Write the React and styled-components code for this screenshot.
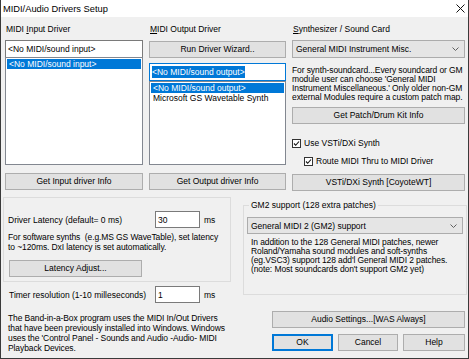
import styled, { createGlobalStyle } from "styled-components";

const GlobalStyle = createGlobalStyle`
  html, body {
    margin: 0;
    padding: 0;
    background: #ffffff;
  }
  body {
    font-family: "Liberation Sans", Arial, sans-serif;
    font-size: 8.5px;
    color: #000;
  }
  * {
    box-sizing: border-box;
  }
`;

const Window = styled.div`
  width: 469px;
  height: 359px;
  display: flex;
  flex-direction: column;
  background: #f0f0f0;
  border: 1px solid #3a3a3a;
  border-top: none;
  overflow: hidden;
`;

const TitleBar = styled.div`
  height: 17px;
  flex-shrink: 0;
  display: flex;
  align-items: center;
  justify-content: space-between;
  padding: 0 3px 0 2px;
  background: #ffffff;
  font-size: 9.3px;
`;

const Body = styled.div`
  flex: 1;
  display: flex;
  flex-direction: column;
  padding-top: 6px;
`;

const TopGrid = styled.div`
  display: grid;
  grid-template-columns: 138px 137px 173px;
  column-gap: 6px;
  padding-left: 4px;
`;

const Column = styled.div`
  display: flex;
  flex-direction: column;
`;

const Label = styled.div`
  height: 12px;
  line-height: 12px;
  margin-bottom: 5px;
  padding-left: 1px;
  white-space: nowrap;
`;

const Button = styled.button`
  width: ${(p) => (p.$w ? `${p.$w}px` : "100%")};
  height: 17px;
  margin: ${(p) => p.$m || "0"};
  padding: 0;
  font-family: inherit;
  font-size: inherit;
  line-height: 15px;
  color: #000;
  background: #e1e1e1;
  border: 1px solid ${(p) => (p.$primary ? "#0078d7" : "#adadad")};
  box-shadow: ${(p) => (p.$primary ? "inset 0 0 0 1px #0078d7" : "none")};
  white-space: nowrap;
`;

const Edit = styled.div`
  width: ${(p) => (p.$w ? `${p.$w}px` : "100%")};
  height: ${(p) => p.$h || 18}px;
  margin-top: ${(p) => p.$mt || 0}px;
  display: flex;
  align-items: center;
  padding-left: 2px;
  background: #ffffff;
  border: 1px solid ${(p) => (p.$focus ? "#0078d7" : "#7a7a7a")};
  white-space: nowrap;
`;

const Selected = styled.span`
  background: #0078d7;
  color: #ffffff;
  line-height: 12px;
`;

const ListBox = styled.div`
  height: ${(p) => p.$h}px;
  margin-top: ${(p) => p.$mt || 0}px;
  padding: 1px;
  background: #ffffff;
  border: 1px solid #828790;
`;

const ListItem = styled.div`
  height: 10px;
  line-height: 10px;
  padding-left: 2px;
  background: ${(p) => (p.$sel ? "#0078d7" : "transparent")};
  color: ${(p) => (p.$sel ? "#ffffff" : "#000")};
  white-space: nowrap;
`;

const Combo = styled.div`
  width: ${(p) => (p.$w ? `${p.$w}px` : "100%")};
  height: ${(p) => p.$h || 18}px;
  margin-top: ${(p) => p.$mt || 0}px;
  display: flex;
  align-items: center;
  justify-content: space-between;
  padding: 0 5px 0 3px;
  background: #e5e5e5;
  border: 1px solid #acacac;
  white-space: nowrap;
`;

const Note = styled.div`
  margin: ${(p) => p.$m || "0"};
  line-height: ${(p) => p.$lh || 9}px;
  letter-spacing: -0.1px;
  white-space: nowrap;
`;

const CheckRow = styled.div`
  height: 10px;
  margin-top: ${(p) => p.$mt}px;
  margin-left: ${(p) => p.$ml || 0}px;
  display: flex;
  align-items: center;
  gap: 3px;
  white-space: nowrap;
`;

const BottomGrid = styled.div`
  display: grid;
  grid-template-columns: 228px 224px;
  column-gap: 12px;
  margin-top: 6px;
  padding-left: 2px;
`;

const LatencyGroup = styled.div`
  height: 85px;
  padding: 13px 0 0 4px;
  border: 1px solid #dcdcdc;
`;

const FieldRow = styled.div`
  height: 17px;
  display: flex;
  align-items: center;
  margin: ${(p) => p.$m || "0"};
  padding-left: ${(p) => p.$pl || 0}px;
`;

const FieldLabel = styled.div`
  width: ${(p) => p.$w}px;
  white-space: nowrap;
`;

const Unit = styled.span`
  margin-left: 4px;
`;

const RightColumn = styled.div`
  display: flex;
  flex-direction: column;
`;

const Group = styled.fieldset`
  margin: 3px 0 0 0;
  padding: 0 3px 20px;
  min-width: 0;
  border: 1px solid #dcdcdc;
`;

const Legend = styled.legend`
  margin-left: 2px;
  padding: 0 2px;
  line-height: 10px;
  white-space: nowrap;
`;

const ButtonRow = styled.div`
  display: flex;
  gap: 5px;
  align-self: flex-end;
  margin: 6px 2px 0 0;
`;

function CloseIcon() {
  return (
    <svg width="9" height="9" viewBox="0 0 9 9">
      <path d="M0.5 0.5 L8.5 8.5 M8.5 0.5 L0.5 8.5" stroke="#111" strokeWidth="1" />
    </svg>
  );
}

function Chevron() {
  return (
    <svg width="7" height="4" viewBox="0 0 7 4">
      <path d="M0.5 0.5 L3.5 3.5 L6.5 0.5" fill="none" stroke="#606060" strokeWidth="1" />
    </svg>
  );
}

function CheckBox() {
  return (
    <svg width="9" height="9" viewBox="0 0 9 9">
      <rect x="0.5" y="0.5" width="8" height="8" fill="#fff" stroke="#333" />
      <path d="M2 4.5 L3.7 6.3 L7 2.5" fill="none" stroke="#111" strokeWidth="1.1" />
    </svg>
  );
}

export default function App() {
  return (
    <>
      <GlobalStyle />
      <Window>
        <TitleBar>
          <span>MIDI/Audio Drivers Setup</span>
          <CloseIcon />
        </TitleBar>
        <Body>
          <TopGrid>
            <Column>
              <Label>
                MIDI <u>I</u>nput Driver
              </Label>
              <Edit>&lt;No MIDI/sound input&gt;</Edit>
              <ListBox $h={108} $mt={-1}>
                <ListItem $sel>&lt;No MIDI/sound input&gt;</ListItem>
              </ListBox>
              <Button $m="8px 0 0 0">Get Input driver Info</Button>
            </Column>

            <Column>
              <Label>
                <u>M</u>IDI Output Driver
              </Label>
              <Button $m="1px 0 0 0">Run Driver Wizard..</Button>
              <Edit $mt={5} $focus>
                <Selected>&lt;No MIDI/sound output&gt;</Selected>
              </Edit>
              <ListBox $h={84}>
                <ListItem $sel>&lt;No MIDI/sound output&gt;</ListItem>
                <ListItem>Microsoft GS Wavetable Synth</ListItem>
              </ListBox>
              <Button $m="8px 0 0 0">Get Output driver Info</Button>
            </Column>

            <Column>
              <Label>
                <u>S</u>ynthesizer / Sound Card
              </Label>
              <Combo>
                <span>General MIDI Instrument Misc.</span>
                <Chevron />
              </Combo>
              <Note $m="8px 0 0 0">
                For synth-soundcard...Every soundcard or GM
                <br />
                module user can choose 'General MIDI
                <br />
                Instrument Miscellaneous.' Only older non-GM
                <br />
                external Modules require a custom patch map.
              </Note>
              <Button $m="5px 0 0 0">Get Patch/Drum Kit Info</Button>
              <CheckRow $mt={14}>
                <CheckBox />
                <span>Use VSTi/DXi Synth</span>
              </CheckRow>
              <CheckRow $mt={8} $ml={12}>
                <CheckBox />
                <span>Route MIDI Thru to MIDI Driver</span>
              </CheckRow>
              <Button $m="8px 0 0 0">VSTi/DXi Synth [CoyoteWT]</Button>
            </Column>
          </TopGrid>

          <BottomGrid>
            <Column>
              <LatencyGroup>
                <FieldRow>
                  <FieldLabel $w={147}>Driver Latency (default= 0 ms)</FieldLabel>
                  <Edit $w={45} $h={17}>30</Edit>
                  <Unit>ms</Unit>
                </FieldRow>
                <Note $m="4px 0 0 0" $lh={10}>
                  For software synths&nbsp; (e.g.MS GS WaveTable), set latency
                  <br />
                  to ~120ms. DxI latency is set automatically.
                </Note>
                <Button $w={133} $m="8px 0 0 1px">
                  Latency Adjust...
                </Button>
              </LatencyGroup>
              <FieldRow $m="4px 0 0 0" $pl={6}>
                <FieldLabel $w={146}>Timer resolution (1-10 milleseconds)</FieldLabel>
                <Edit $w={45} $h={17}>1</Edit>
                <Unit>ms</Unit>
              </FieldRow>
              <Note $m="10px 0 0 5px" $lh={10}>
                The Band-in-a-Box program uses the MIDI In/Out Drivers
                <br />
                that have been previously installed into Windows. Windows
                <br />
                uses the 'Control Panel - Sounds and Audio -Audio- MIDI
                <br />
                Playback Devices.
              </Note>
            </Column>

            <RightColumn>
              <Group>
                <Legend>GM2 support (128 extra patches)</Legend>
                <Combo $w={216} $h={17} $mt={7}>
                  <span>General MIDI 2 (GM2) support</span>
                  <Chevron />
                </Combo>
                <Note $m="4px 0 0 4px">
                  In addition to the 128 General MIDI patches, newer
                  <br />
                  Roland/Yamaha sound modules and soft-synths
                  <br />
                  (eg.VSC3) support 128 add'l General MIDI 2 patches.
                  <br />
                  (note: Most soundcards don't support GM2 yet)
                </Note>
              </Group>
              <Button $w={193} $m="16px 2px 0 0" style={{ alignSelf: "flex-end" }}>
                Audio Settings...[WAS Always]
              </Button>
              <ButtonRow>
                <Button $w={61} $primary>
                  OK
                </Button>
                <Button $w={60}>Cancel</Button>
                <Button $w={62}>Help</Button>
              </ButtonRow>
            </RightColumn>
          </BottomGrid>
        </Body>
      </Window>
    </>
  );
}
